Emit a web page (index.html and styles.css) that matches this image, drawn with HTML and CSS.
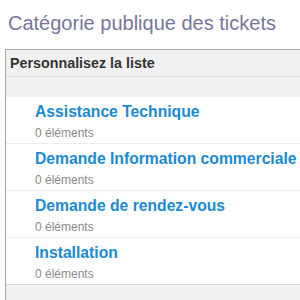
FILE: index.html
```html
<!DOCTYPE html>
<html lang="fr">
<head>
  <meta charset="UTF-8" />
  <title>Catégorie publique des tickets</title>
  <link rel="stylesheet" href="styles.css">
</head>
<body>

  <h1 class="page-title">Catégorie publique des tickets</h1>

  <div class="panel">
    <div class="panel-head">Personnalisez la liste</div>
    <div class="panel-bar"></div>
    <ul class="cat-list">
      <li class="cat-item">
        <a class="cat-name" href="#">Assistance Technique</a>
        <div class="cat-count">0 éléments</div>
      </li>
      <li class="cat-item">
        <a class="cat-name" href="#">Demande Information commerciale</a>
        <div class="cat-count">0 éléments</div>
      </li>
      <li class="cat-item">
        <a class="cat-name" href="#">Demande de rendez-vous</a>
        <div class="cat-count">0 éléments</div>
      </li>
      <li class="cat-item">
        <a class="cat-name" href="#">Installation</a>
        <div class="cat-count">0 éléments</div>
      </li>
    </ul>
    <div class="panel-foot"></div>
  </div>

</body>
</html>
```

FILE: styles.css
```css
body {
  margin: 0;
  padding: 0;
  overflow: hidden;
  font-family: 'Liberation Sans', Arial, sans-serif;
  background: #fff;
}
.page-title {
  margin: 0;
  padding: 13px 0 0 8px;
  height: 49px;
  box-sizing: border-box;
  font-size: 20px;
  line-height: 20px;
  font-weight: normal;
  color: #76769a;
  white-space: nowrap;
}
.panel {
  margin-left: 5px;
  border-top: 1px solid #a9a9a9;
  border-left: 1px solid #a9a9a9;
  background: #f1f1f1;
}
.panel-head {
  height: 26px;
  line-height: 26px;
  padding-left: 4px;
  font-size: 14.3px;
  font-weight: bold;
  color: #333;
  border-bottom: 1px solid #dcdcdc;
}
.panel-bar {
  height: 20px;
}
.cat-list {
  list-style: none;
  margin: 0;
  padding: 0;
  background: #fff;
}
.cat-item {
  height: 46px;
  padding-left: 29px;
  border-bottom: 1px solid #ececec;
  white-space: nowrap;
}
.cat-name {
  display: block;
  padding-top: 6px;
  font-size: 15.7px;
  line-height: 18px;
  font-weight: bold;
  color: #1a8ad4;
  text-decoration: none;
}
.cat-count {
  margin-top: 5px;
  font-size: 12px;
  line-height: 14px;
  color: #8a8a8a;
}
.cat-list .cat-item:last-child {
  border-bottom: 1px solid #d8d8d8;
}
.panel-foot {
  height: 20px;
}
```
